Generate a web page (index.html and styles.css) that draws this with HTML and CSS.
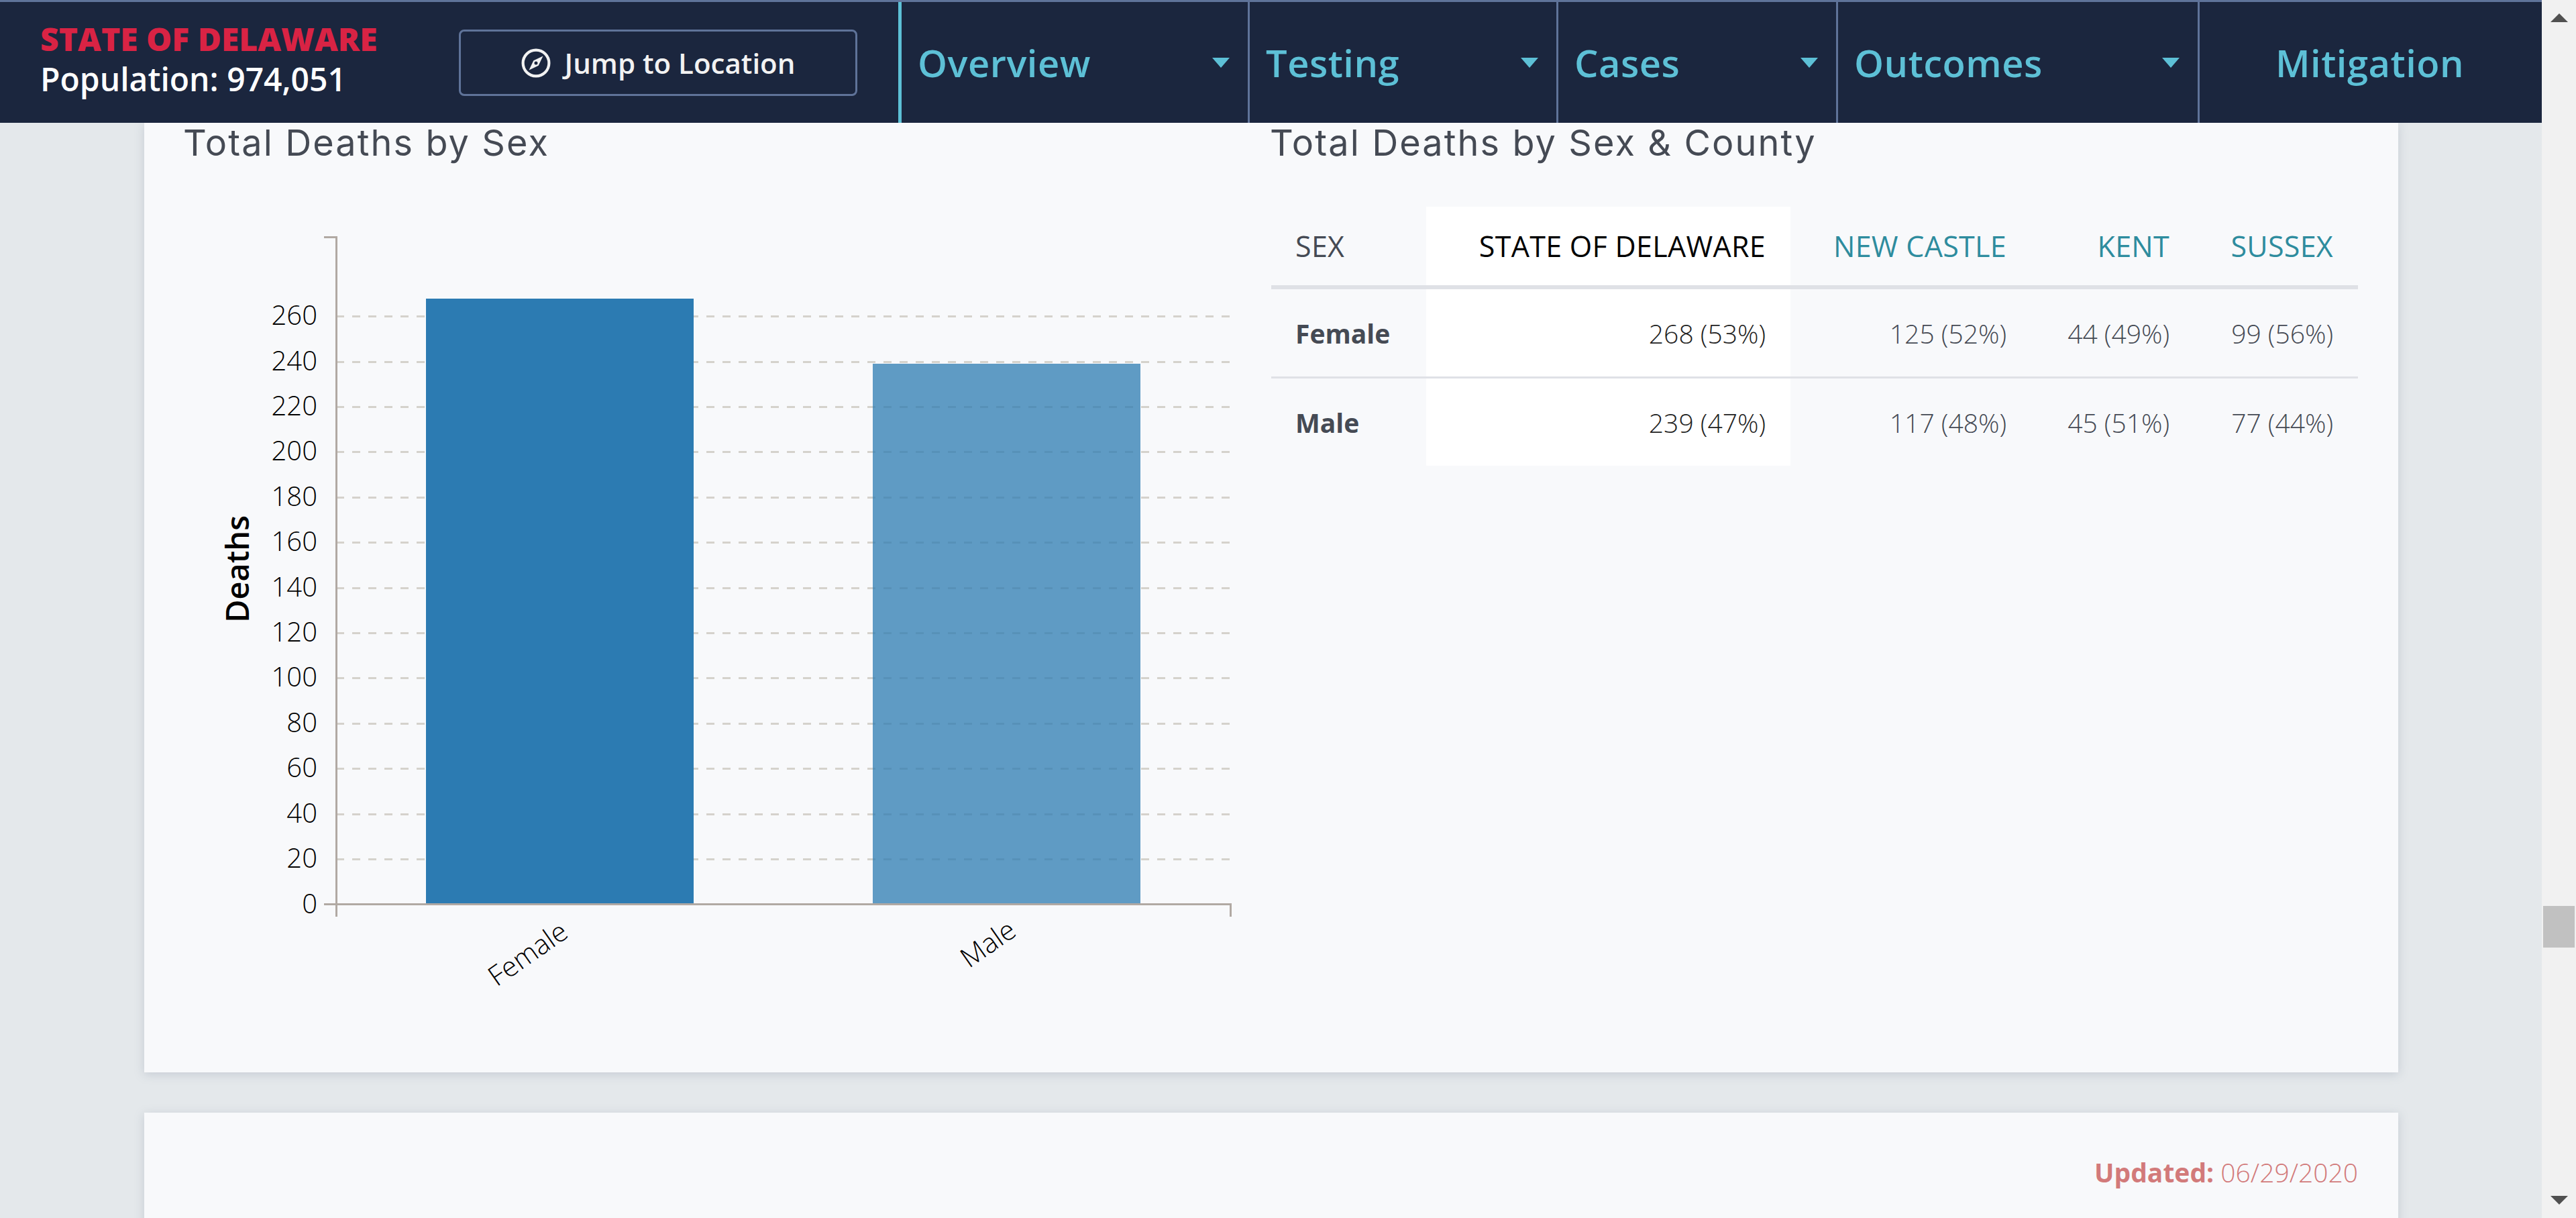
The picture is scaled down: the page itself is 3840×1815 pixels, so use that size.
FILE: index.html
```html
<!DOCTYPE html>
<html lang="en">
<head>
    <meta charset="UTF-8">
    <title>State of Delaware - Outcomes</title>
    <link rel="stylesheet" href="styles.css">
</head>
<body>
<div class="page">
    <div class="viewport">
        <header class="topbar">
            <div class="location">
                <div class="state-name">
                    <div class="state-title">STATE OF DELAWARE</div>
                    <div class="state-pop">Population: 974,051</div>
                </div>
                <button class="jump-btn" type="button">
                    <svg class="compass" viewBox="0 0 42 42">
                        <circle cx="21" cy="21" r="18.5" fill="none" stroke="#f2f2f2" stroke-width="4"/>
                        <path d="M31 11 L24.5 24.5 L11 31 L17.5 17.5 Z M21 18.6 A2.4 2.4 0 1 0 21 23.4 A2.4 2.4 0 1 0 21 18.6 Z" fill="#f2f2f2" fill-rule="evenodd"/>
                    </svg>
                    Jump to Location
                </button>
            </div>
            <nav class="mainnav">
                <a class="nav-item nav-overview" href="#">Overview<span class="caret"></span></a>
                <a class="nav-item nav-testing" href="#">Testing<span class="caret"></span></a>
                <a class="nav-item nav-cases" href="#">Cases<span class="caret"></span></a>
                <a class="nav-item nav-outcomes" href="#">Outcomes<span class="caret"></span></a>
                <a class="nav-item nav-mitigation" href="#">Mitigation</a>
            </nav>
        </header>

        <main class="content">
            <section class="card card-deaths">
                <div class="panel panel-chart">
                    <h2>Total Deaths by Sex</h2>
                    <svg class="chart" width="1620" height="1200" viewBox="0 86 1620 1200">
                        <g class="grid">
                            <line x1="281" x2="1614" y1="1058.5" y2="1058.5"/>
                            <line x1="281" x2="1614" y1="991.5" y2="991.5"/>
                            <line x1="281" x2="1614" y1="923.5" y2="923.5"/>
                            <line x1="281" x2="1614" y1="856.5" y2="856.5"/>
                            <line x1="281" x2="1614" y1="788.5" y2="788.5"/>
                            <line x1="281" x2="1614" y1="721.5" y2="721.5"/>
                            <line x1="281" x2="1614" y1="654.5" y2="654.5"/>
                            <line x1="281" x2="1614" y1="586.5" y2="586.5"/>
                            <line x1="281" x2="1614" y1="519.5" y2="519.5"/>
                            <line x1="281" x2="1614" y1="451.5" y2="451.5"/>
                            <line x1="281" x2="1614" y1="384.5" y2="384.5"/>
                            <line x1="281" x2="1614" y1="317.5" y2="317.5"/>
                            <line x1="281" x2="1614" y1="249.5" y2="249.5"/>
                        </g>
                        <rect class="bar-female" x="415" y="223" width="399" height="902"/>
                        <rect class="bar-male" x="1081" y="320" width="399" height="805"/>
                        <path class="axis" d="M263 131.5 H281.5 V1144 M263 1125.5 H1614.5 V1144"/>
                        <g class="ticks">
                            <text x="253" y="1139">0</text>
                            <text x="253" y="1071">20</text>
                            <text x="253" y="1004">40</text>
                            <text x="253" y="936">60</text>
                            <text x="253" y="869">80</text>
                            <text x="253" y="801">100</text>
                            <text x="253" y="734">120</text>
                            <text x="253" y="667">140</text>
                            <text x="253" y="599">160</text>
                            <text x="253" y="532">180</text>
                            <text x="253" y="464">200</text>
                            <text x="253" y="397">220</text>
                            <text x="253" y="330">240</text>
                            <text x="253" y="262">260</text>
                        </g>
                        <text class="y-title" transform="translate(151 626) rotate(-90)">Deaths</text>
                        <text class="x-label" transform="translate(575 1211) rotate(-35)">Female</text>
                        <text class="x-label" transform="translate(1261 1196) rotate(-35)">Male</text>
                    </svg>
                </div>
                <div class="panel panel-table">
                    <h2>Total Deaths by Sex &amp; County</h2>
                    <table class="county-table">
                        <colgroup>
                            <col class="col-sex"><col class="col-state"><col class="col-castle"><col class="col-kent"><col class="col-sussex">
                        </colgroup>
                        <thead>
                            <tr>
                                <th class="left">SEX</th>
                                <th class="current">STATE OF DELAWARE</th>
                                <th class="county">NEW CASTLE</th>
                                <th class="county">KENT</th>
                                <th class="county">SUSSEX</th>
                            </tr>
                        </thead>
                        <tbody>
                            <tr>
                                <td class="left">Female</td>
                                <td class="current">268 (53%)</td>
                                <td>125 (52%)</td>
                                <td>44 (49%)</td>
                                <td>99 (56%)</td>
                            </tr>
                            <tr>
                                <td class="left">Male</td>
                                <td class="current">239 (47%)</td>
                                <td>117 (48%)</td>
                                <td>45 (51%)</td>
                                <td>77 (44%)</td>
                            </tr>
                        </tbody>
                    </table>
                </div>
            </section>

            <section class="card card-next">
                <p class="updated"><strong>Updated:</strong> 06/29/2020</p>
            </section>
        </main>
    </div>

    <div class="scrollbar">
        <span class="arrow-up"></span>
        <div class="thumb-track"><div class="thumb"></div></div>
        <span class="arrow-down"></span>
    </div>
</div>
</body>
</html>
```

FILE: styles.css
```css
html, body {
    margin: 0;
    height: 100%;
    overflow: hidden;
}

body {
    font-family: "Open Sans", "Liberation Sans", sans-serif;
    background-color: #e4e8eb;
}

.page {
    display: flex;
    height: 1815px;
}

.viewport {
    flex: 1;
    min-width: 0;
    overflow: hidden;
    background-color: #e4e8eb;
}

/* top bar */
.topbar {
    display: flex;
    height: 180px;
    background-color: #1b263e;
    border-top: 3px solid #5f7399;
    position: relative;
    z-index: 2;
}

.location {
    width: 1339px;
    box-sizing: border-box;
    display: flex;
    align-items: flex-start;
    padding-left: 60px;
}

.state-name {
    width: 624px;
    padding-top: 25px;
}

.state-title {
    color: #d92344;
    font-size: 48px;
    font-weight: 800;
    line-height: 60px;
}

.state-pop {
    color: #fff;
    font-size: 48px;
    font-weight: 600;
    line-height: 60px;
}

.jump-btn {
    width: 594px;
    height: 99px;
    margin-top: 41px;
    display: flex;
    align-items: center;
    justify-content: center;
    gap: 21px;
    background: transparent;
    border: 3px solid #5f7399;
    border-radius: 8px;
    color: #f2f2f2;
    font-family: inherit;
    font-size: 42px;
    font-weight: 600;
}

.compass {
    flex: none;
    width: 44px;
    height: 44px;
}

.mainnav {
    flex: 1;
    display: flex;
    border-left: 5px solid #5dc0d6;
}

.nav-item {
    display: flex;
    align-items: center;
    justify-content: space-between;
    box-sizing: border-box;
    padding: 0 27px 0 24px;
    border-left: 3px solid #5f7399;
    color: #5dc0d6;
    font-size: 56px;
    font-weight: 600;
    letter-spacing: 0.5px;
    text-decoration: none;
}

.nav-overview { width: 516px; border-left: 0; }
.nav-testing { width: 460px; }
.nav-cases { width: 417px; }
.nav-outcomes { width: 539px; }
.nav-mitigation { flex: 1; justify-content: center; }

.caret {
    width: 0;
    height: 0;
    border-left: 13px solid transparent;
    border-right: 13px solid transparent;
    border-top: 15px solid #5dc0d6;
}

/* cards */
.content {
    padding: 0 214px 0 215px;
}

.card {
    background-color: #f8f9fb;
    box-shadow: 0 3px 14px rgba(120, 130, 150, 0.28);
}

.card-deaths {
    display: flex;
    height: 1415px;
    padding: 0 60px;
}

.panel-chart {
    width: 1620px;
}

.panel-table {
    flex: 1;
}

.panel h2 {
    margin: -2px 0 0 -2px;
    color: #454a54;
    font-family: Inter, "Open Sans", sans-serif;
    font-size: 54px;
    font-weight: 400;
    letter-spacing: 2.1px;
    line-height: 64px;
    height: 127px;
}

.chart {
    display: block;
    margin-left: -55px;
}

.grid line {
    stroke: #d5d2cc;
    stroke-width: 3;
    stroke-dasharray: 12 12;
}

.bar-female { fill: #2c7bb2; }
.bar-male { fill: #2c7bb2; fill-opacity: 0.75; }

.axis {
    fill: none;
    stroke: #b1a9a3;
    stroke-width: 3;
}

.ticks text {
    fill: #000;
    font-size: 40px;
    font-weight: 300;
    text-anchor: end;
}

.y-title {
    fill: #000;
    font-size: 47px;
    font-weight: 600;
    text-anchor: middle;
}

.x-label {
    fill: #000;
    font-size: 41px;
    font-weight: 300;
    text-anchor: middle;
}

/* table */
.county-table {
    width: 1620px;
    table-layout: fixed;
    border-collapse: collapse;
}

.col-sex { width: 231px; }
.col-state { width: 543px; }
.col-castle { width: 359px; }
.col-kent { width: 243px; }
.col-sussex { width: 244px; }

.county-table th, .county-table td {
    padding: 0 37px;
    text-align: right;
    font-size: 39px;
}

.county-table th {
    height: 117px;
    font-size: 43px;
    font-weight: 500;
    letter-spacing: 0.3px;
    border-bottom: 6px solid #dfe1e6;
}

.county-table td {
    height: 130px;
    font-weight: 300;
    color: #454a54;
    border-bottom: 3px solid #dfe1e6;
}

.county-table tbody tr:last-child td {
    border-bottom: 0;
}

.county-table .left {
    padding-left: 36px;
    text-align: left;
    color: #454a54;
}

.county-table td.left {
    font-weight: 700;
}

.county-table .county {
    color: #2e8c9e;
}

.county-table .current {
    background-color: #fff;
    color: #000;
}

.county-table td.current {
    color: #222;
}

.card-next {
    margin-top: 60px;
    height: 400px;
    padding: 62px 60px 0;
}

.updated {
    margin: 0;
    text-align: right;
    color: #d27a7a;
    font-size: 39px;
    font-weight: 300;
}

.updated strong {
    font-weight: 700;
}

/* scrollbar */
.scrollbar {
    width: 51px;
    display: flex;
    flex-direction: column;
    align-items: center;
    background-color: #f1f1f1;
}

.arrow-up {
    margin-top: 20px;
    width: 0;
    height: 0;
    border-left: 13px solid transparent;
    border-right: 13px solid transparent;
    border-bottom: 13px solid #505050;
}

.arrow-down {
    margin-bottom: 20px;
    width: 0;
    height: 0;
    border-left: 13px solid transparent;
    border-right: 13px solid transparent;
    border-top: 13px solid #505050;
}

.thumb-track {
    flex: 1;
    width: 100%;
}

.thumb {
    height: 62px;
    margin: 1317px 2px 0;
    background-color: #c1c1c1;
}
```
